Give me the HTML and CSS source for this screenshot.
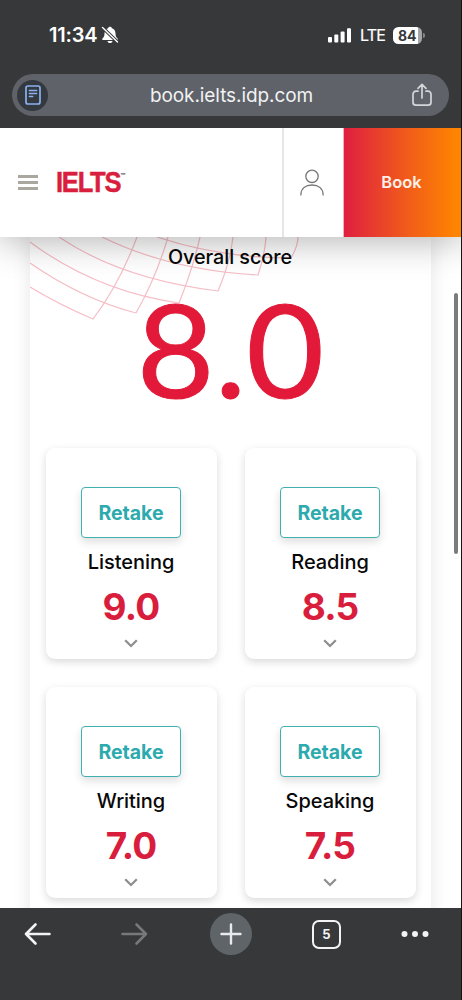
FILE: index.html
```html
<!DOCTYPE html>
<html lang="en">
<head>
<meta charset="utf-8">
<meta name="viewport" content="width=device-width, initial-scale=1">
<title>IELTS results</title>
<link rel="stylesheet" href="styles.css">
</head>
<body>
<div class="phone">
  <div class="chrome-top">
    <div class="status">
      <div class="status-left">
        <span class="time">11:34</span>
        <svg class="bell" width="18" height="18" viewBox="0 0 18 18"><path fill="#fff" d="M9 .8c-1 0-1.700.6-1.900 1.400C4.700 2.900 3.500 5 3.500 7.500c0 3-1 4-2.100 5.100-.5.600-.2 1.300.5 1.300h14.200c.7 0 1-.7.5-1.300-1.100-1.100-2.100-2.100-2.100-5.100 0-2.500-1.200-4.600-3.600-5.300C10.700 1.400 10 .8 9 .8zM6.500 14.900h5c-.2 1.300-1.200 2.200-2.500 2.200s-2.300-.9-2.500-2.200z"/><path stroke="#37383a" stroke-width="3.200" d="M1.500 1.500l15 14.500"/><path stroke="#fff" stroke-width="1.400" stroke-linecap="round" d="M1.500 1.500l15 14.500"/></svg>
      </div>
      <div class="status-right">
        <svg width="24" height="15" viewBox="0 0 24 15" fill="#fff"><rect x="0" y="9" width="4" height="5.500" rx="1"/><rect x="6.300" y="6.500" width="4" height="8" rx="1"/><rect x="12.600" y="3.500" width="4" height="11" rx="1"/><rect x="19" y="0.300" width="4" height="14.200" rx="1"/></svg>
        <span class="lte">LTE</span>
        <div class="battery"><span class="level">84</span></div><i class="nub"></i>
      </div>
    </div>
    <div class="url-bar">
      <span class="reader"><svg width="16" height="20" viewBox="0 0 16 20" fill="none" stroke="#8bb1ee" stroke-width="1.700" stroke-linecap="round"><rect x="1" y="1" width="14" height="18" rx="2"/><path stroke-width="1.300" d="M4.300 5.500h7.400M4.300 8.500h7.400M4.300 11.500h3.500"/></svg></span>
      <span class="url">book.ielts.idp.com</span>
      <svg class="share" width="20" height="24" viewBox="0 0 20 24" fill="none" stroke="#d4d6da" stroke-width="1.700" stroke-linecap="round" stroke-linejoin="round"><path d="M6 8.200H4a3 3 0 0 0-3 3v8a3 3 0 0 0 3 3h12a3 3 0 0 0 3-3v-8a3 3 0 0 0-3-3h-2M10 15V1.500M6 5.300l4-4 4 4"/></svg>
    </div>
  </div>

  <header class="site-header">
    <div class="brand">
      <span class="menu"><i></i><i></i><i></i></span>
      <span class="logo">IELTS<sup>™</sup></span>
    </div>
    <div class="account"><svg width="24" height="28" viewBox="0 0 24 28" fill="none" stroke="#777" stroke-width="1.300"><circle cx="12" cy="7.300" r="6.200"/><path d="M.9 26.500v-1.300C1.200 19.500 5.500 16 12 16s10.800 3.500 11.100 9.200v1.300"/></svg></div>
    <div class="book">Book</div>
  </header>

  <main class="content">
    <section class="panel">
      <svg class="mesh" width="290" height="90" viewBox="0 0 290 90" fill="none" stroke="#f6bec6" stroke-width="1.200">
        <path d="M0 50Q30 68 63 82Q89 48 107 0"/>
        <path d="M0 26Q52 62 106 76Q126 41 138 0"/>
        <path d="M0 5Q66 54 149 66Q163 31 170 0"/>
        <path d="M29 0Q91 42 188 54Q200 26 203 0"/>
        <path d="M72 0Q139 33 228 38Q235 17 236 0"/>
        <path d="M127 0Q190 21 261 21Q268 9 268 0"/>
      </svg>
      <div class="overall-label">Overall score</div>
      <div class="overall">8.0</div>
      <div class="cards">
        <article class="card"><button class="retake">Retake</button><h2>Listening</h2><strong>9.0</strong><svg class="chevron" width="14" height="9" viewBox="0 0 14 9"><path d="M1.200 1.300L7 7l5.800-5.700"/></svg></article>
        <article class="card"><button class="retake">Retake</button><h2>Reading</h2><strong>8.5</strong><svg class="chevron" width="14" height="9" viewBox="0 0 14 9"><path d="M1.200 1.300L7 7l5.800-5.700"/></svg></article>
        <article class="card"><button class="retake">Retake</button><h2>Writing</h2><strong>7.0</strong><svg class="chevron" width="14" height="9" viewBox="0 0 14 9"><path d="M1.200 1.300L7 7l5.800-5.700"/></svg></article>
        <article class="card"><button class="retake">Retake</button><h2>Speaking</h2><strong>7.5</strong><svg class="chevron" width="14" height="9" viewBox="0 0 14 9"><path d="M1.200 1.300L7 7l5.800-5.700"/></svg></article>
      </div>
    </section>
    <i class="scrollbar"></i>
  </main>

  <nav class="toolbar">
    <span class="slot"><svg width="28" height="24" viewBox="0 0 28 24" fill="none" stroke="#f3f3f5" stroke-width="2.600" stroke-linecap="round" stroke-linejoin="round"><path d="M25.500 12H2M11.500 2.500L2 12l9.500 9.500"/></svg></span>
    <span class="slot"><svg width="28" height="24" viewBox="0 0 28 24" fill="none" stroke="#77787b" stroke-width="2.600" stroke-linecap="round" stroke-linejoin="round"><path d="M2.500 12H26M16.500 2.500L26 12l-9.500 9.500"/></svg></span>
    <span class="slot"><span class="plus"><svg width="22" height="22" viewBox="0 0 22 22" fill="none" stroke="#e8eaed" stroke-width="2.400" stroke-linecap="round"><path d="M11 1.500v19M1.500 11h19"/></svg></span></span>
    <span class="slot"><span class="tabs">5</span></span>
    <span class="slot"><svg width="28" height="8" viewBox="0 0 28 8" fill="#f3f3f5"><circle cx="3.500" cy="4" r="3"/><circle cx="14" cy="4" r="3"/><circle cx="24.500" cy="4" r="3"/></svg></span>
  </nav>
  <i class="edge"></i>
</div>
</body>
</html>
```

FILE: styles.css
```css
* { box-sizing: border-box; }
body { margin: 0; background: #fff; font-family: Inter, sans-serif; }
svg { display: block; flex: none; }
.phone { position: relative; width: 462px; height: 1000px; overflow: hidden; display: flex; flex-direction: column; }

.chrome-top { flex: none; height: 128px; padding: 23px 13px 0 12px; background: #37383a; color: #fff; }
.status { display: flex; justify-content: space-between; align-items: center; height: 24px; padding: 0 24px 0 37px; }
.status-left, .status-right { display: flex; align-items: center; }
.time { font-size: 20px; font-weight: 600; letter-spacing: -0.200px; }
.bell { margin-left: 4px; }
.lte { margin: 0 8px 0 8px; font-size: 16px; font-weight: 400; letter-spacing: -0.800px; -webkit-text-stroke: 0.200px #fff; }
.battery { width: 29px; height: 17px; border-radius: 5.500px; background: linear-gradient(90deg, #fff 25px, #a5a6a8 25px); }
.level { display: block; padding-left: 5px; color: #37383a; font-size: 14px; line-height: 17px; font-weight: 700; letter-spacing: 0; }
.nub { width: 2px; height: 5px; margin-left: 1px; border-radius: 0 2px 2px 0; background: #858688; }
.url-bar { display: flex; align-items: center; justify-content: space-between; height: 42px; margin-top: 27px; padding: 0 17px 0 5px; border-radius: 21px; background: #5f6268; }
.reader { display: flex; align-items: center; justify-content: center; width: 31px; height: 31px; border-radius: 50%; background: #34383f; }
.url { margin-left: 3px; color: #f1f2f4; font-size: 19px; letter-spacing: -0.080px; }

.site-header { position: relative; z-index: 2; flex: none; display: flex; height: 109px; background: #fff; box-shadow: 0 4px 34px rgba(0, 0, 0, 0.300); clip-path: inset(0 0 -60px 0); }
.brand { display: flex; align-items: center; width: 282px; padding-left: 18px; }
.menu { display: grid; gap: 3px; width: 20px; }
.menu i { height: 3px; background: #aaa79f; }
.logo { margin: -2px 0 0 18px; color: #d91f3d; font-family: "Liberation Sans", Arial, sans-serif; font-weight: 700; font-size: 29px; line-height: 30px; letter-spacing: -1.400px; transform: scaleX(0.880); transform-origin: left; -webkit-text-stroke: 0.500px #d91f3d; }
.logo sup { position: relative; top: -15px; left: 0; color: #333; font-size: 6px; line-height: 0; vertical-align: baseline; letter-spacing: 0; -webkit-text-stroke: 0; }
.account { display: flex; align-items: center; justify-content: center; width: 61px; padding-right: 3px; border-left: 2px solid #e6e6e6; }
.book { display: flex; align-items: center; justify-content: center; flex: 1; padding: 0 3px 2px 0; border-left: 1px solid #f6aeb9; background: linear-gradient(90deg, #df1f40, #f05a1b 52%, #ff8500 96%); color: #fff1e8; font-size: 16.500px; font-weight: 600; }

.content { position: relative; flex: 1; min-height: 0; padding: 0 31px 0 30px; overflow: hidden; background: #fff; }
.panel { position: relative; height: 700px; background: #fff; box-shadow: 0 0 18px rgba(0, 0, 0, 0.100); text-align: center; }
.mesh { position: absolute; left: 0; top: 0; }
.overall-label { position: relative; height: 40px; padding: 8px 1px 0 0; font-size: 19.800px; line-height: 24px; font-weight: 500; letter-spacing: -0.050px; color: #080808; }
.overall { position: relative; height: 171px; color: #e21938; font-family: Lato, sans-serif; font-size: 129px; line-height: 143px; -webkit-text-stroke: 1px #e21938; transform: scaleX(1.040); }
.cards { display: grid; grid-template-columns: 171px 171px; gap: 28px; padding-left: 16px; }
.card { display: flex; flex-direction: column; align-items: center; height: 211px; padding: 39px 1px 0 0; border-radius: 9px; background: #fff; box-shadow: 0 3px 8px rgba(0, 0, 0, 0.150); }
.retake { width: 100px; height: 51px; padding: 0; border: 1.500px solid #43b0b0; border-radius: 4px; background: #fff; box-shadow: 0 4px 8px rgba(0, 0, 0, 0.130); color: #2caaad; font: 700 19.500px/48px Inter, sans-serif; }
.card h2 { margin: 12px 0 0; font-size: 20px; line-height: 24px; font-weight: 500; letter-spacing: -0.050px; color: #080808; }
.card strong { margin-top: 11px; height: 44px; color: #d81e3c; font: 700 37px/44px Inter, sans-serif; letter-spacing: -0.800px; }
.chevron { margin-top: 10px; fill: none; stroke: #8e8e8e; stroke-width: 2.300; }
.scrollbar { position: absolute; right: 4px; top: 56px; width: 4px; height: 261px; border-radius: 2px; background: #7c7c7c; }

.toolbar { flex: none; display: grid; grid-template-columns: 75px 118px 76px 115px 61px; height: 92px; padding-top: 4px; background: #37383a; }
.slot { display: flex; align-items: center; justify-content: center; height: 44px; }
.plus { display: flex; align-items: center; justify-content: center; width: 42px; height: 42px; border-radius: 50%; background: #5f6468; }
.tabs { width: 29px; height: 29px; border: 2px solid #f3f3f5; border-radius: 7px; color: #f3f3f5; font-size: 13px; line-height: 25px; font-weight: 700; text-align: center; }
.edge { position: absolute; z-index: 3; right: 0; top: 0; width: 1px; height: 1000px; background: #161617; }
```
